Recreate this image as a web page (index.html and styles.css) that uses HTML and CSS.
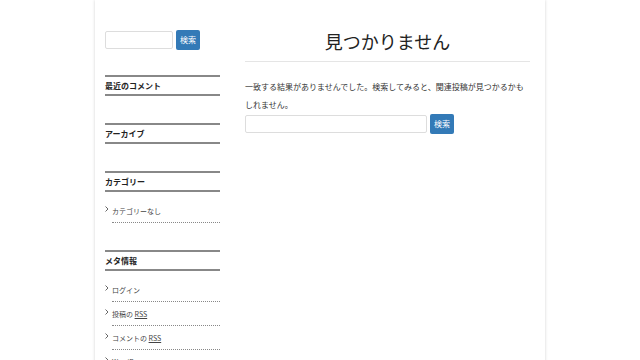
FILE: index.html
```html
<!DOCTYPE html>
<html lang="ja">
<head>
    <meta charset="UTF-8">
    <meta name="viewport" content="width=device-width, initial-scale=1.0">
    <title>見つかりません</title>
    <link rel="stylesheet" href="styles.css">
</head>
<body>
    <div class="page">
        <!-- サイドバー -->
        <aside class="sidebar">
            <form class="search-form side-search">
                <input type="text" class="search-field">
                <button type="button" class="search-btn">検索</button>
            </form>

            <section class="widget">
                <h2 class="widget-title">最近のコメント</h2>
            </section>

            <section class="widget">
                <h2 class="widget-title">アーカイブ</h2>
            </section>

            <section class="widget">
                <h2 class="widget-title">カテゴリー</h2>
                <ul class="widget-list">
                    <li><span class="mark"><svg width="4" height="6" viewBox="0 0 4 6"><path d="M0.5 0.5 L3 3 L0.5 5.5" fill="none" stroke="#555" stroke-width="0.9"/></svg></span><span class="item">カテゴリーなし</span></li>
                </ul>
            </section>

            <section class="widget">
                <h2 class="widget-title">メタ情報</h2>
                <ul class="widget-list">
                    <li><span class="mark"><svg width="4" height="6" viewBox="0 0 4 6"><path d="M0.5 0.5 L3 3 L0.5 5.5" fill="none" stroke="#555" stroke-width="0.9"/></svg></span><span class="item">ログイン</span></li>
                    <li><span class="mark"><svg width="4" height="6" viewBox="0 0 4 6"><path d="M0.5 0.5 L3 3 L0.5 5.5" fill="none" stroke="#555" stroke-width="0.9"/></svg></span><span class="item">投稿の <u>RSS</u></span></li>
                    <li><span class="mark"><svg width="4" height="6" viewBox="0 0 4 6"><path d="M0.5 0.5 L3 3 L0.5 5.5" fill="none" stroke="#555" stroke-width="0.9"/></svg></span><span class="item">コメントの <u>RSS</u></span></li>
                    <li><span class="mark"><svg width="4" height="6" viewBox="0 0 4 6"><path d="M0.5 0.5 L3 3 L0.5 5.5" fill="none" stroke="#555" stroke-width="0.9"/></svg></span><span class="item">WordPress.org</span></li>
                </ul>
            </section>
        </aside>

        <!-- メイン -->
        <main class="content">
            <h1 class="page-title">見つかりません</h1>
            <p class="notice">一致する結果がありませんでした。検索してみると、関連投稿が見つかるかもしれません。</p>
            <form class="search-form main-search">
                <input type="text" class="search-field">
                <button type="button" class="search-btn">検索</button>
            </form>
        </main>
    </div>
</body>
</html>
```

FILE: styles.css
```css
body {
    margin: 0;
    background-color: #fff;
    font-family: "Noto Sans CJK JP", "Noto Sans", sans-serif;
    color: #333;
}

.page {
    width: 450px;
    min-height: 360px;
    margin: 0 auto;
    padding: 0 15px 0 10px;
    box-sizing: border-box;
    display: flex;
    background-color: #fff;
    box-shadow: 0 0 3px rgba(0, 0, 0, 0.18);
}

.sidebar {
    width: 115px;
    padding-top: 30px;
}

.content {
    flex: 1;
    margin-left: 25px;
}

/* 検索フォーム */
.search-form {
    display: flex;
    align-items: center;
    gap: 3px;
    height: 19px;
    margin: 0;
}

.search-field {
    height: 18px;
    padding: 0 3px;
    border: 1px solid #ddd;
    border-radius: 2px;
    box-sizing: border-box;
    background: #fff;
}

.side-search .search-field {
    width: 68px;
}

.main-search .search-field {
    width: 182px;
}

.search-btn {
    width: 24px;
    height: 20px;
    padding: 0;
    border: none;
    border-radius: 2px;
    background-color: #337ab7;
    color: #fff;
    font-family: inherit;
    font-size: 8px;
    line-height: 20px;
}

/* ウィジェット */
.widget {
    margin-top: 26px;
}

.widget + .widget {
    margin-top: 27px;
}

.widget-title {
    margin: 0;
    border-top: 2px solid #888;
    border-bottom: 2px solid #888;
    font-size: 8px;
    font-weight: bold;
    line-height: 17px;
    color: #222;
}

.widget-list {
    list-style: none;
    margin: 7px 0 0;
    padding: 0;
}

.widget-list li {
    display: flex;
    font-size: 7px;
    line-height: 12px;
    color: #444;
}

.mark {
    width: 7px;
    padding-top: 7px;
    line-height: 0;
}

.item {
    flex: 1;
    padding: 6px 0 5px;
    border-bottom: 1px dotted #888;
}

/* メイン */
.page-title {
    margin: 28px 0 0;
    padding-bottom: 7px;
    border-bottom: 1px solid #e5e5e5;
    text-align: center;
    font-size: 18px;
    font-weight: normal;
    line-height: 26px;
    color: #222;
}

.notice {
    margin: 16px 0 0;
    font-size: 8px;
    line-height: 18px;
    color: #333;
}
```
